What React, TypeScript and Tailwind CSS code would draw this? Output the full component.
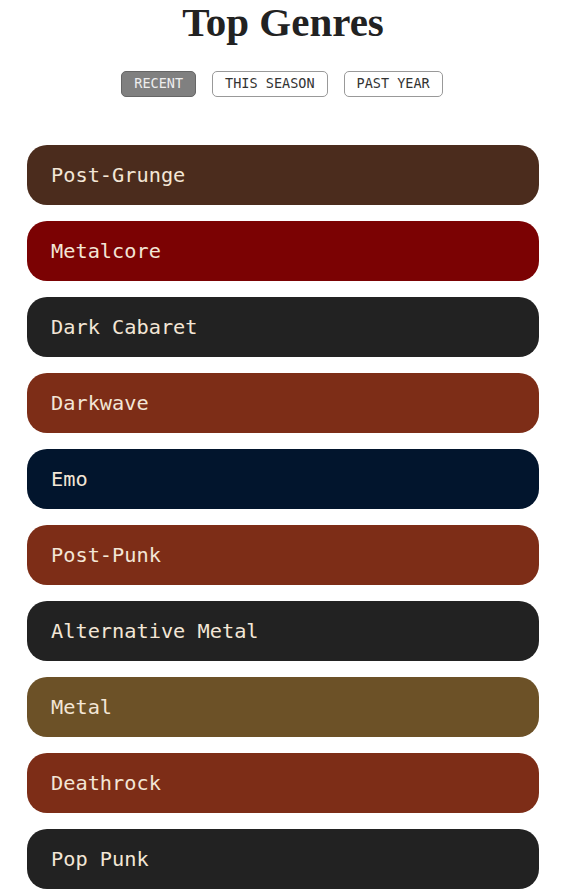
import { useState } from "react";

const genres = [
  { name: "Post-Grunge", color: "bg-[#4b2c1d]" },
  { name: "Metalcore", color: "bg-[#7b0203]" },
  { name: "Dark Cabaret", color: "bg-[#222222]" },
  { name: "Darkwave", color: "bg-[#7d2d17]" },
  { name: "Emo", color: "bg-[#02152d]" },
  { name: "Post-Punk", color: "bg-[#7d2d17]" },
  { name: "Alternative Metal", color: "bg-[#222222]" },
  { name: "Metal", color: "bg-[#6c5127]" },
  { name: "Deathrock", color: "bg-[#7d2d17]" },
  { name: "Pop Punk", color: "bg-[#222222]" },
];

const ranges = ["Recent", "This Season", "Past Year"];

export default function App() {
  const [range, setRange] = useState("Recent");

  return (
    <div className="min-h-screen bg-white">
      <h1 className="pl-[4px] text-center font-['Liberation_Serif',serif] text-[41px] font-bold leading-[44px] text-[#222]">
        Top Genres
      </h1>

      <div className="mt-[27px] flex justify-center gap-4 pl-[2px] font-['DejaVu_Sans_Mono',monospace] text-[13.5px]">
        {ranges.map((r) => (
          <button
            key={r}
            onClick={() => setRange(r)}
            className={`h-[26px] rounded-[5px] border px-3 uppercase leading-none ${
              range === r
                ? "border-[#666] bg-[#808080] text-[#eee]"
                : "border-[#999] bg-white text-[#333]"
            }`}
          >
            {r}
          </button>
        ))}
      </div>

      <ul className="ml-[27px] mt-[48px] flex w-[512px] flex-col gap-4">
        {genres.map((g) => (
          <li
            key={g.name}
            className={`flex h-[60px] items-center rounded-[20px] px-6 pt-[1px] font-['DejaVu_Sans_Mono',monospace] text-[20.3px] text-[#f3e6d6] ${g.color}`}
          >
            {g.name}
          </li>
        ))}
      </ul>
    </div>
  );
}
